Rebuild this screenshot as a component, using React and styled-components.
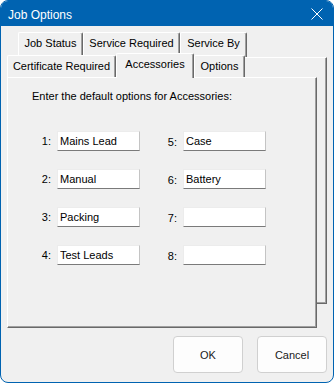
import React from "react"
import styled, { createGlobalStyle, css } from "styled-components"

const Global = createGlobalStyle`
  html, body {
    margin: 0;
    padding: 0;
    background: #ffffff;
  }
  * {
    box-sizing: border-box;
  }
`

const Window = styled.div`
  width: 334px;
  height: 383px;
  border: 1px solid #0063b1;
  border-radius: 8px;
  overflow: hidden;
  background: #f0f0f0;
  display: flex;
  flex-direction: column;
  font-family: "Liberation Sans", Arial, sans-serif;
  font-size: 11px;
  color: #000;
`

const TitleBar = styled.div`
  height: 25px;
  background: #0063b1;
  display: flex;
  align-items: center;
  justify-content: space-between;
  padding: 0 10px 0 7px;
`

const Title = styled.span`
  color: #ffffff;
  font-size: 12px;
  line-height: 14px;
  padding-top: 2px;
`

const Body = styled.div`
  flex: 1;
  display: flex;
  flex-direction: column;
  padding: 6px 6px 0 6px;
`

const Stack = styled.div`
  display: grid;
  width: 320px;
`

const Layer = styled.div`
  grid-area: 1 / 1;
  align-self: start;
  margin-top: ${p => p.top || 0}px;
`

const TabRow = styled.div`
  display: flex;
  align-items: flex-start;
  height: ${p => p.height}px;
  padding-left: ${p => p.indent || 0}px;
`

const Tab = styled.div`
  width: ${p => p.width}px;
  height: ${p => p.height}px;
  margin-top: ${p => p.offset || 0}px;
  background: #f0f0f0;
  border-top: 1px solid #ffffff;
  border-left: 1px solid #ffffff;
  border-right: 1px solid #696969;
  box-shadow: inset -1px 0 0 #a0a0a0;
  border-radius: 2px 2px 0 0;
  padding-top: 4px;
  text-align: center;
  line-height: 13px;
  white-space: nowrap;
  ${p =>
    p.active &&
    css`
      position: relative;
      z-index: 1;
      margin-bottom: -1px;
    `}
`

const BackPanel = styled.div`
  width: 320px;
  height: 247px;
  background: #f0f0f0;
  border-top: 1px solid #ffffff;
  border-right: 1px solid #696969;
  border-bottom: 1px solid #696969;
  box-shadow: inset -1px -1px 0 #a0a0a0;
`

const FrontPanel = styled.div`
  width: 310px;
  height: 251px;
  background: #f0f0f0;
  border-top: 1px solid #ffffff;
  border-left: 1px solid #ffffff;
  border-right: 1px solid #696969;
  border-bottom: 1px solid #696969;
  box-shadow: inset -1px -1px 0 #a0a0a0;
  padding: 12px 0 0 24px;
`

const Heading = styled.div`
  line-height: 13px;
`

const FieldGrid = styled.div`
  display: grid;
  grid-template-columns: 103px 103px;
  column-gap: 23px;
  row-gap: 18px;
  margin: 28px 0 0 5px;
`

const Field = styled.div`
  display: flex;
  align-items: center;
`

const FieldLabel = styled.span`
  width: 20px;
  padding-right: 6px;
  text-align: right;
  line-height: 13px;
  padding-top: ${p => (p.low ? 3 : 1)}px;
`

const TextBox = styled.input`
  width: 83px;
  height: 20px;
  margin: 0;
  padding: 0 2px;
  background: #ffffff;
  border: 1px solid;
  border-color: #ececec #c4c4c4 #7a7a7a #ececec;
  font-family: "Liberation Sans", Arial, sans-serif;
  font-size: 11px;
  color: #000;
  outline: none;
`

const ButtonBar = styled.div`
  display: flex;
  justify-content: flex-end;
  gap: 14px;
  margin-top: 8px;
`

const Button = styled.button`
  width: 70px;
  height: 37px;
  background: #fdfdfd;
  border: 1px solid #d0d0d0;
  border-radius: 4px;
  font-family: "Liberation Sans", Arial, sans-serif;
  font-size: 11px;
  color: #1a1a1a;
  padding: 0;
`

const CloseIcon = () => (
  <svg width="12" height="12" viewBox="0 0 12 12">
    <path d="M0.5 0.5 L11.5 11.5 M11.5 0.5 L0.5 11.5" stroke="#ffffff" strokeWidth="1" fill="none" />
  </svg>
)

const fields = [
  ["1:", "Mains Lead", "5:", "Case"],
  ["2:", "Manual", "6:", "Battery"],
  ["3:", "Packing", "7:", ""],
  ["4:", "Test Leads", "8:", ""]
]

export default function App() {
  return (
    <>
      <Global />
      <Window>
        <TitleBar>
          <Title>Job Options</Title>
          <CloseIcon />
        </TitleBar>
        <Body>
          <Stack>
            <Layer>
              <TabRow height={25} indent={11}>
                <Tab width={65} height={25}>Job Status</Tab>
                <Tab width={97} height={25}>Service Required</Tab>
                <Tab width={67} height={25}>Service By</Tab>
              </TabRow>
            </Layer>
            <Layer top={25}>
              <BackPanel />
            </Layer>
            <Layer top={21}>
              <TabRow height={24}>
                <Tab width={109} height={22} offset={2}>Certificate Required</Tab>
                <Tab width={78} height={25} active>Accessories</Tab>
                <Tab width={51} height={22} offset={2}>Options</Tab>
              </TabRow>
              <FrontPanel>
                <Heading>Enter the default options for Accessories:</Heading>
                <FieldGrid>
                  {fields.map(row => (
                    <React.Fragment key={row[0]}>
                      <Field>
                        <FieldLabel>{row[0]}</FieldLabel>
                        <TextBox readOnly value={row[1]} />
                      </Field>
                      <Field>
                        <FieldLabel low>{row[2]}</FieldLabel>
                        <TextBox readOnly value={row[3]} />
                      </Field>
                    </React.Fragment>
                  ))}
                </FieldGrid>
              </FrontPanel>
            </Layer>
          </Stack>
          <ButtonBar>
            <Button>OK</Button>
            <Button>Cancel</Button>
          </ButtonBar>
        </Body>
      </Window>
    </>
  )
}
